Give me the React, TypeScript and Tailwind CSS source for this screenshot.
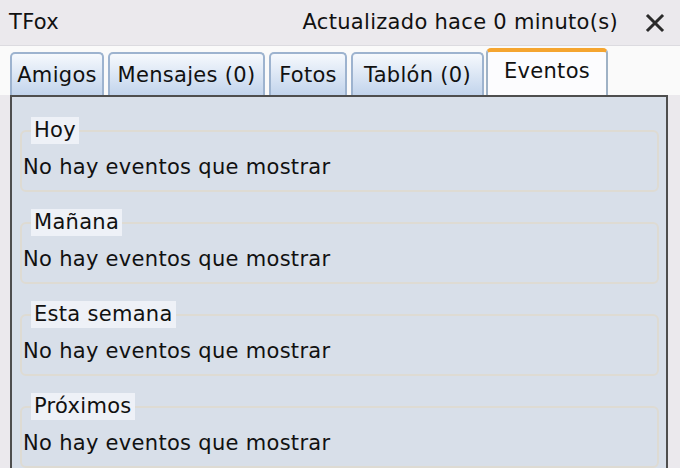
import React from 'react'

const tabs = [
  { label: 'Amigos', w: 'w-[94px]' },
  { label: 'Mensajes (0)', w: 'w-[157px]' },
  { label: 'Fotos', w: 'w-[78px]' },
  { label: 'Tablón (0)', w: 'w-[133px]' },
]

const groups = ['Hoy', 'Mañana', 'Esta semana', 'Próximos']

function CloseIcon() {
  return (
    <svg width="20" height="20" viewBox="0 0 20 20" className="block">
      <path d="M3 3 L17 17 M17 3 L3 17" stroke="#2b2b2b" strokeWidth="3" strokeLinecap="square" />
    </svg>
  )
}

function EventGroup({ title }: { title: string }) {
  return (
    <div className="flex flex-col">
      {/* legend sits over the box's top edge */}
      <div className="relative z-10 ml-[11px] mb-[-14px] w-fit h-[27px] px-[3px] bg-[#eef1f7] leading-[27px]">
        {title}
      </div>
      <div className="h-[62px] rounded-[6px] border-2 border-[#dedbd3] pt-[22px] pl-[1px] leading-[27px]">
        No hay eventos que mostrar
      </div>
    </div>
  )
}

export default function App() {
  return (
    <div
      className="w-[680px] h-[468px] overflow-hidden bg-[#ebe9ed] text-[21px] tracking-[0.3px] text-[#111]"
      style={{ fontFamily: '"DejaVu Sans", "Liberation Sans", sans-serif' }}
    >
      {/* Header */}
      <header className="h-[46px] flex items-center pl-[9px] pr-[15px] border-b border-[#dcdbe0]">
        <span>TFox</span>
        <span className="ml-auto">Actualizado hace 0 minuto(s)</span>
        <span className="ml-[27px]">
          <CloseIcon />
        </span>
      </header>

      {/* Tabs */}
      <div className="h-[49px] bg-[#fafafa] flex items-end pl-[10px]">
        {tabs.map((t) => (
          <div
            key={t.label}
            className={`${t.w} h-[43px] mr-[4px] rounded-t-[5px] border-2 border-b-0 border-[#9db3cf] bg-gradient-to-b from-[#f6f9fd] to-[#c2d4ec] flex items-center justify-center leading-none pt-[2px]`}
          >
            {t.label}
          </div>
        ))}
        <div className="w-[122px] h-[47px] -ml-[2px] rounded-t-[5px] border-2 border-b-0 border-[#9fb2c6] border-t-[4px] border-t-[#f5a530] bg-[#fcfcfe] flex items-center justify-center leading-none pb-[4px]">
          Eventos
        </div>
      </div>

      {/* Panel */}
      <div className="pl-[10px] pr-[12px]">
        <div className="h-[400px] border-2 border-[#4e4e4e] bg-[#d8dfe9] pt-[20px] pl-[8px] pr-[7px] flex flex-col gap-[17px]">
          {groups.map((g) => (
            <EventGroup key={g} title={g} />
          ))}
        </div>
      </div>
    </div>
  )
}
